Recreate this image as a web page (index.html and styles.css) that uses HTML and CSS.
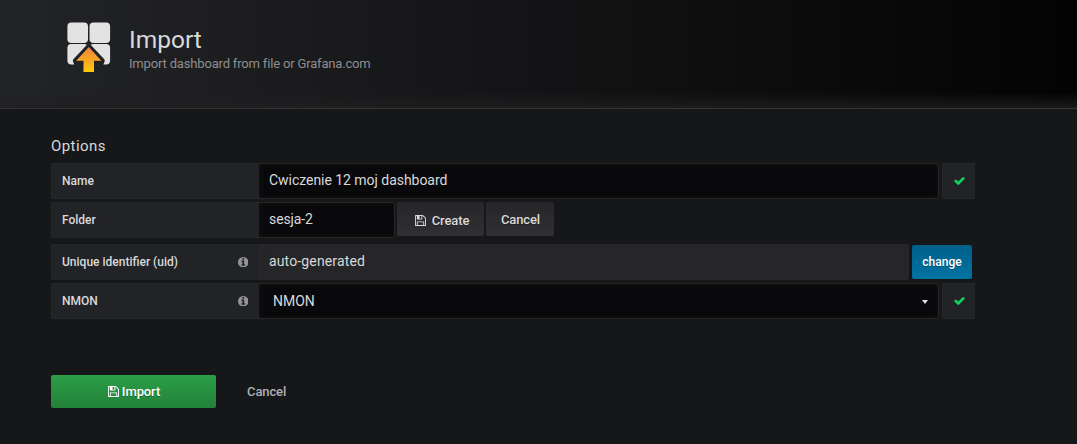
FILE: index.html
```
<!DOCTYPE html>
<html lang="en">
<head>
<meta charset="utf-8">
<title>Import</title>
<link rel="stylesheet" href="styles.css">
</head>
<body>
<svg class="symbols" aria-hidden="true">
  <symbol id="save" viewBox="128 128 1536 1536"><path d="M512 1536h768v-384h-768v384zm896 0h128v-896q0-14-10-38.5t-20-34.5l-281-281q-10-10-34-20t-39-10v416q0 40-28 68t-68 28h-576q-40 0-68-28t-28-68v-416h-128v1280h128v-416q0-40 28-68t68-28h832q40 0 68 28t28 68v416zm-384-928v-320q0-13-9.5-22.5t-22.5-9.5h-192q-13 0-22.5 9.5t-9.5 22.5v320q0 13 9.5 22.5t22.5 9.5h192q13 0 22.5-9.5t9.5-22.5zm640 32v928q0 40-28 68t-68 28h-1344q-40 0-68-28t-28-68v-1344q0-40 28-68t68-28h928q40 0 88 20t76 48l280 280q28 28 48 76t20 88z"/></symbol>
  <symbol id="info" viewBox="128 128 1536 1536"><path d="M1152 1376v-160q0-14-9-23t-23-9h-96v-512q0-14-9-23t-23-9h-320q-14 0-23 9t-9 23v160q0 14 9 23t23 9h96v320h-96q-14 0-23 9t-9 23v160q0 14 9 23t23 9h448q14 0 23-9t9-23zm-128-896v-160q0-14-9-23t-23-9h-192q-14 0-23 9t-9 23v160q0 14 9 23t23 9h192q14 0 23-9t9-23zm640 416q0 209-103 385.5t-279.5 279.5-385.5 103-385.5-103-279.5-279.5-103-385.5 103-385.5 279.5-279.5 385.5-103 385.5 103 279.5 279.5 103 385.5z"/></symbol>
  <symbol id="check" viewBox="121 334 1550 1188"><path d="M1671 566q0 40-28 68l-724 724-136 136q-28 28-68 28t-68-28l-136-136-362-362q-28-28-28-68t28-68l136-136q28-28 68-28t68 28l294 295 656-657q28-28 68-28t68 28l136 136q28 28 28 68z"/></symbol>
</svg>
<header class="page-header">
  <svg class="logo" viewBox="0 0 44 51">
    <defs>
      <linearGradient id="arrow" x1="0" y1="0" x2="0" y2="1">
        <stop offset="0" stop-color="#f0823f"/><stop offset="1" stop-color="#fdca0a"/>
      </linearGradient>
      <mask id="cut">
        <rect width="44" height="51" fill="#fff"/>
        <path d="M21.800 24.500 35.200 38.700 32.500 46H11L8.400 38.700Z" fill="#000" stroke="#000" stroke-width="5" stroke-linejoin="round"/>
      </mask>
    </defs>
    <g fill="#e3e3e3" mask="url(#cut)">
      <rect x=".4" y=".4" width="20.600" height="20.600" rx="4"/>
      <rect x="22.500" y=".4" width="20.600" height="20.600" rx="4"/>
      <rect x=".4" y="21.900" width="20.600" height="20.600" rx="4"/>
      <rect x="22.500" y="21.900" width="20.600" height="20.600" rx="4"/>
    </g>
    <path d="M21.800 25 34.400 38.700H27V50H16.500V38.700H9.200Z" fill="url(#arrow)"/>
  </svg>
  <div class="heading">
    <h1 class="title">Import</h1>
    <div class="subtitle">Import dashboard from file or Grafana.com</div>
  </div>
</header>
<main class="page-body">
  <h2 class="section-title">Options</h2>
  <div class="row">
    <label class="label">Name</label>
    <div class="field">Cwiczenie 12 moj dashboard</div>
    <span class="status"><svg class="check"><use href="#check"/></svg></span>
  </div>
  <div class="row row-folder">
    <label class="label">Folder</label>
    <div class="field field-folder">sesja-2</div>
    <button class="btn btn-create"><svg class="save"><use href="#save"/></svg>Create</button>
    <button class="btn btn-dismiss">Cancel</button>
  </div>
  <div class="row">
    <label class="label">Unique identifier (uid)<svg class="info"><use href="#info"/></svg></label>
    <div class="field field-uid">auto-generated</div>
    <button class="btn btn-change">change</button>
  </div>
  <div class="row">
    <label class="label">NMON<svg class="info"><use href="#info"/></svg></label>
    <div class="field field-select">NMON<span class="caret"></span></div>
    <span class="status"><svg class="check"><use href="#check"/></svg></span>
  </div>
  <div class="actions">
    <button class="btn btn-import"><svg class="save"><use href="#save"/></svg>Import</button>
    <a class="cancel-link">Cancel</a>
  </div>
</main>
</body>
</html>
```
FILE: styles.css
```
* { box-sizing: border-box; }
body {
  margin: 0;
  height: 444px;
  overflow: hidden;
  background: #161719;
  color: #d8d9da;
  font-family: Roboto, "Liberation Sans", sans-serif;
  font-size: 14px;
}
svg { fill: currentColor; flex: none; }
.symbols { display: none; }

.page-header {
  display: flex;
  align-items: flex-start;
  height: 109px;
  padding: 22px 0 0 67px;
  background:
    linear-gradient(transparent 92px, rgba(31, 31, 32, .4) 100px, rgba(31, 31, 32, .8) 108px),
    linear-gradient(90deg, #232427, #030303);
  border-bottom: 1px solid #343436;
}
.logo { width: 44px; height: 51px; }
.heading { padding: 3px 0 0 18px; }
.title { margin: 0; font-size: 24.500px; line-height: 29px; font-weight: 400; }
.subtitle {
  margin-top: 1px;
  font-size: 13px;
  line-height: 18px;
  letter-spacing: -.17px;
  color: #8e8e8e;
}

.page-body { padding: 27px 51px 0; }
.section-title {
  margin: 0 0 7px;
  font-size: 15px;
  line-height: 20px;
  font-weight: 400;
  letter-spacing: .42px;
}
.row { display: flex; height: 36px; margin-bottom: 3px; }
.row-folder { margin-bottom: 6px; }
.label {
  display: flex;
  align-items: center;
  justify-content: space-between;
  width: 208px;
  padding: 0 11px 0 10px;
  background: #222327;
  border: 1px solid #262628;
  border-right: 0;
  border-radius: 2px 0 0 2px;
  font-size: 12px;
  font-weight: 500;
}
.info { width: 10.500px; height: 10.500px; color: #949494; }
.field {
  width: 680px;
  padding: 0 10px;
  background: #09090b;
  border: 1px solid #262628;
  border-left: 0;
  border-radius: 0 3px 3px 0;
  box-shadow: inset 1px 0 5px #141414;
  line-height: 33px;
  letter-spacing: -.04px;
}
.field-folder { width: 136px; letter-spacing: -.1px; }
.field-uid {
  width: 650px;
  background: #262628;
  box-shadow: inset 1px 0 4px #2a2a2b;
  letter-spacing: .14px;
}
.field-select {
  display: flex;
  align-items: center;
  justify-content: space-between;
  padding-left: 14px;
}
.caret {
  margin-top: 2px;
  border: 3.500px solid transparent;
  border-top: 4px solid #e3e3e3;
  border-bottom: 0;
}
.status {
  display: flex;
  align-items: center;
  justify-content: center;
  width: 33px;
  margin-left: 3px;
  background: #222327;
  border: 1px solid #262628;
  border-right: 0;
  border-radius: 2px 0 0 2px;
}
.check { width: 11px; height: 8px; color: #10d15c; }

.btn {
  display: flex;
  align-items: center;
  justify-content: center;
  height: 34px;
  padding: 0;
  border: 0;
  border-radius: 2px;
  background: linear-gradient(#262628, #303033);
  color: #d8d9da;
  font: 500 13px Roboto, "Liberation Sans", sans-serif;
  letter-spacing: -.1px;
  text-shadow: 0 1px 0 rgba(0, 0, 0, .3);
}
.save { width: 11px; height: 11px; }
.btn-create { width: 87px; margin-left: 2px; gap: 6px; padding: 2px 0 0 3px; }
.btn-dismiss { width: 68px; margin-left: 2px; padding-left: 1px; }
.btn-change {
  width: 60px;
  margin: 1px 0 0 3px;
  background: linear-gradient(#00608a, #0073a3);
  color: #fff;
  font-size: 12px;
  letter-spacing: 0;
}
.actions { display: flex; gap: 31px; margin-top: 56px; align-items: center; }
.btn-import {
  width: 165px;
  height: 33px;
  padding-left: 1px;
  gap: 3px;
  background: linear-gradient(#2a9e46, #23823a);
  color: #fff;
}
.cancel-link { font-size: 13px; font-weight: 500; letter-spacing: -.1px; color: #b0b0b2; }
```
